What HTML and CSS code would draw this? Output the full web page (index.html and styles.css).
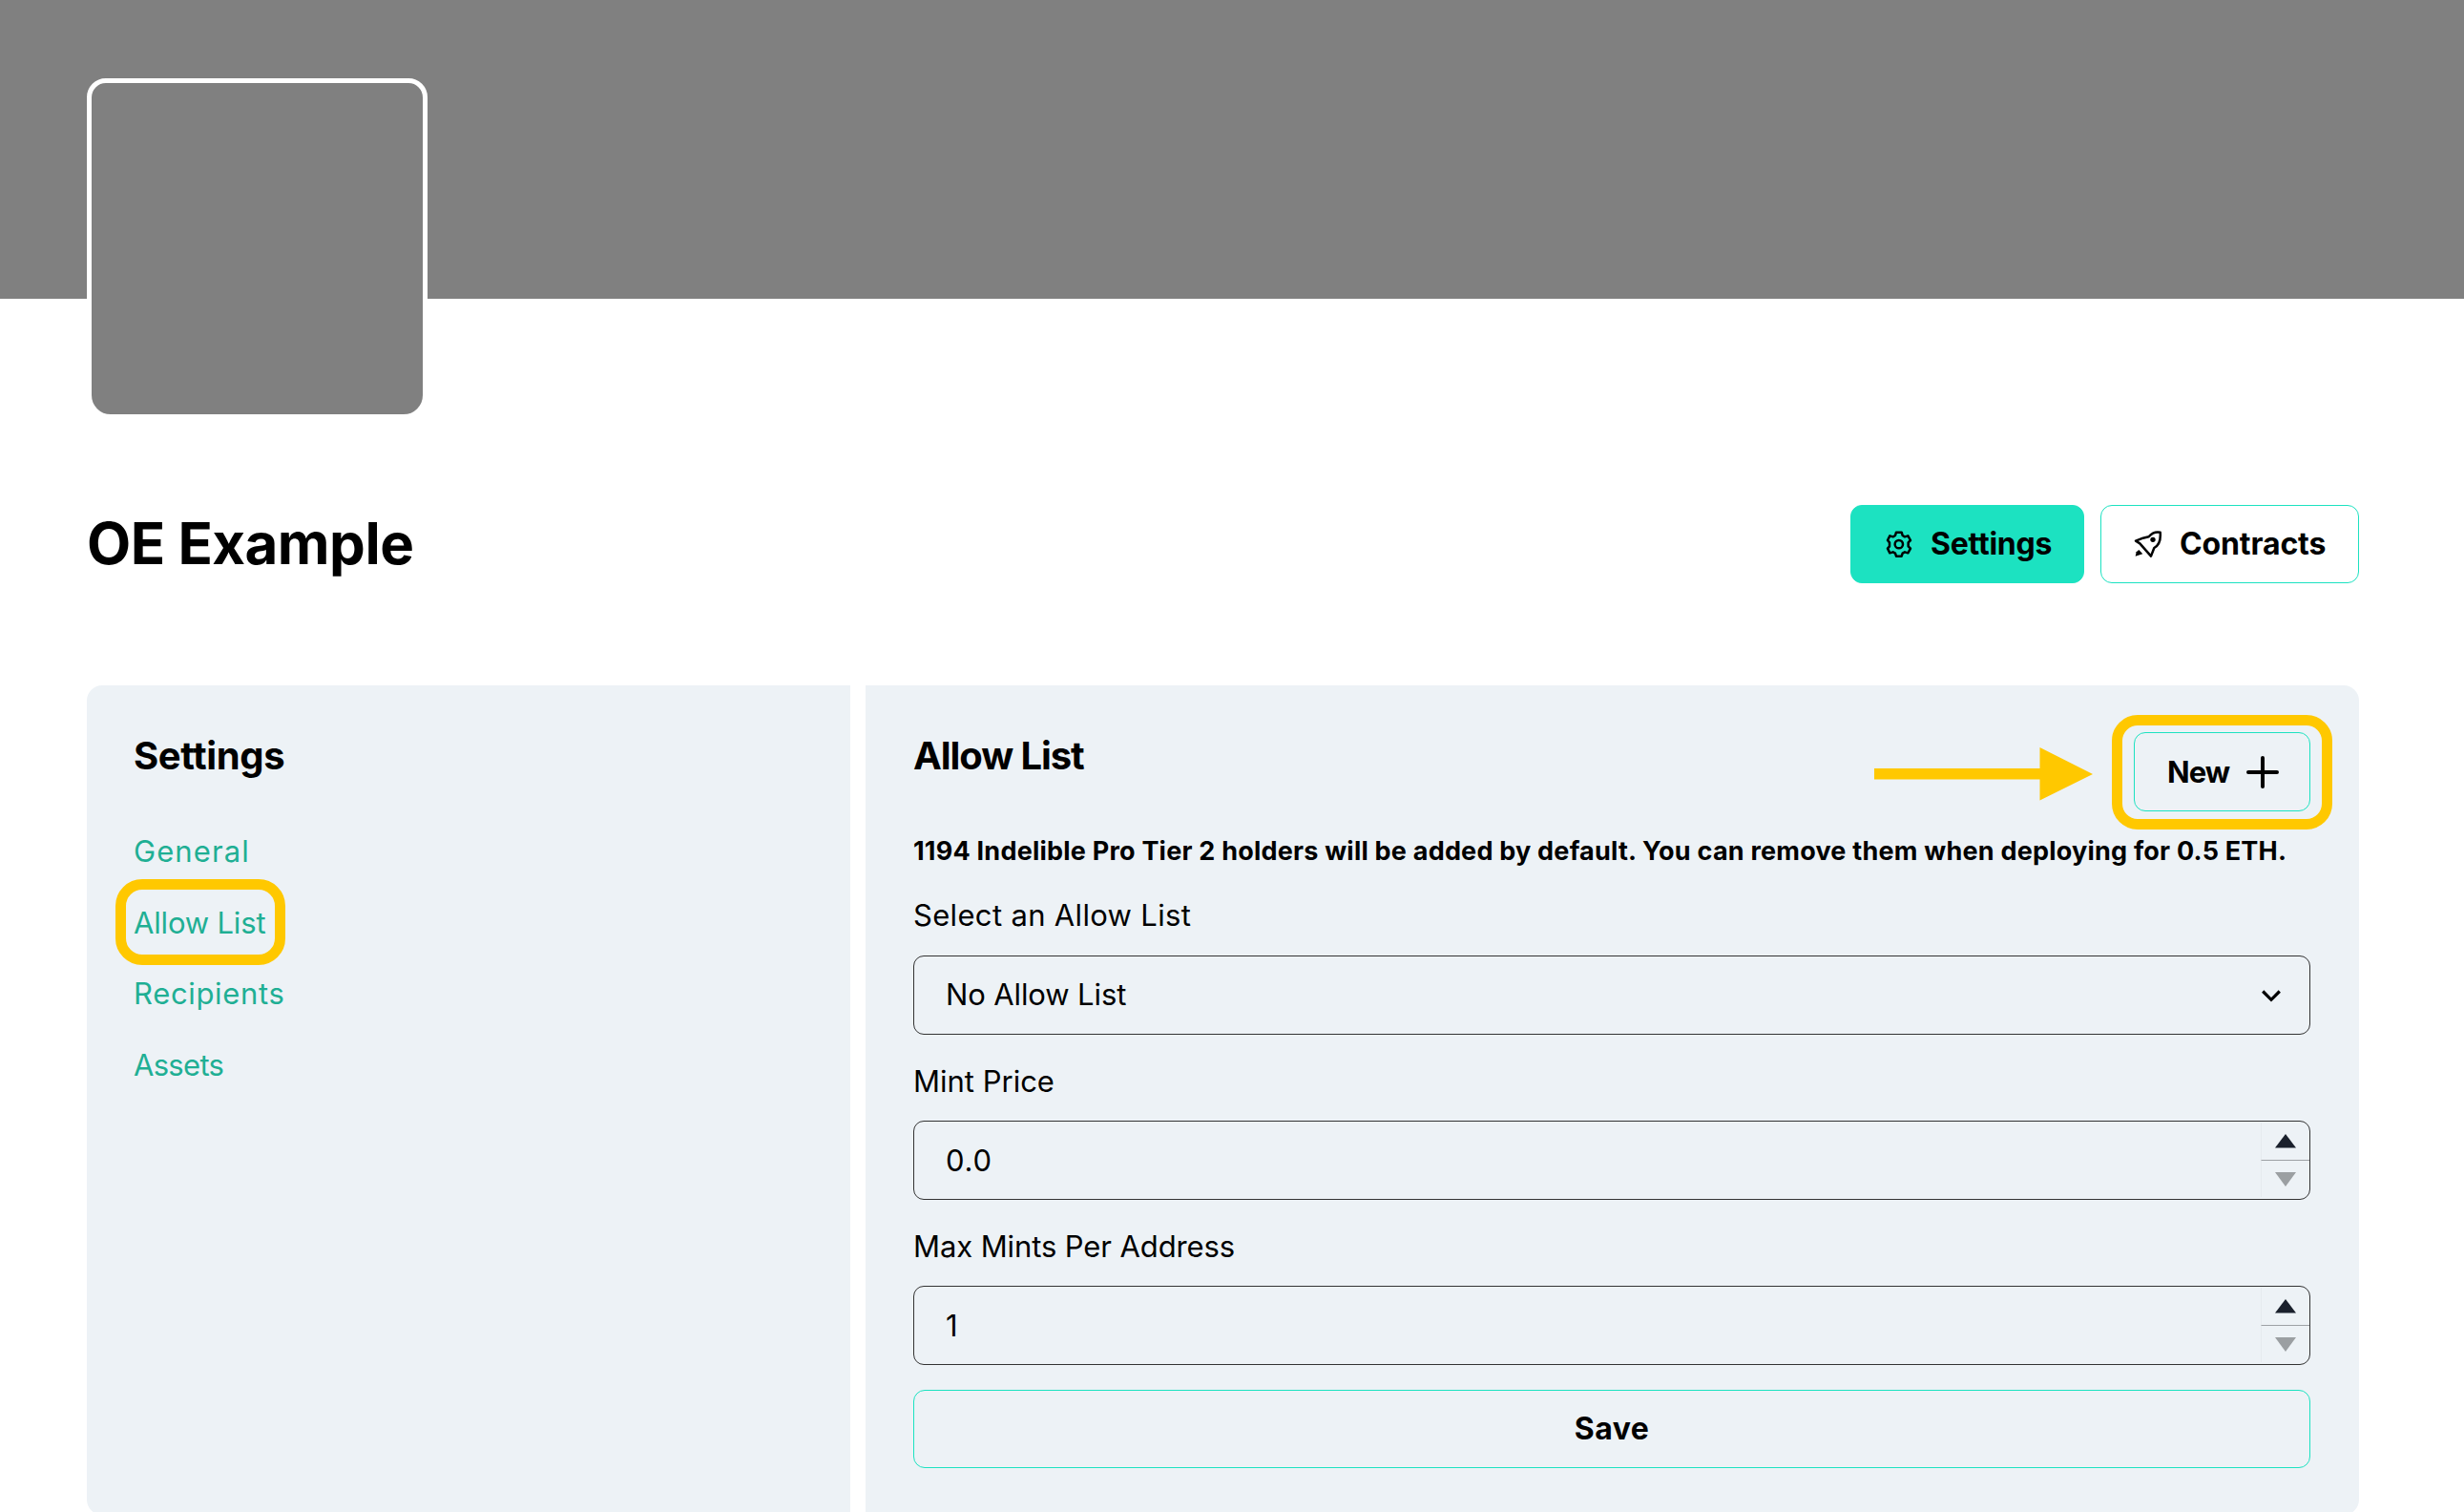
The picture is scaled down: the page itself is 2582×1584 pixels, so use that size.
FILE: index.html
```html
<!DOCTYPE html>
<html lang="en">
<head>
<meta charset="utf-8">
<title>OE Example – Settings</title>
<link rel="stylesheet" href="styles.css">
</head>
<body>
<div class="banner"><div class="avatar"></div></div>
<main class="page">
  <header class="toolbar">
    <h1 class="title">OE Example</h1>
    <div class="actions">
      <button class="btn btn-primary">
        <svg class="gear" viewBox="48 45 84 84" fill="none" stroke="currentColor" stroke-width="7.500" stroke-linejoin="round"><path d="M81 50H98L101 60 108 64 118 61 126 75 119 82V94L126 101 118 115 108 112 101 116 98 125H81L78 116 71 112 61 115 54 101 60 94V82L54 75 61 61 71 64 78 60Z"/><circle cx="89.500" cy="87.500" r="12.500"/></svg>
        <span>Settings</span>
      </button>
      <button class="btn btn-contracts">
        <svg class="rocket" viewBox="48 45 90 84" fill="none" stroke="currentColor" stroke-width="7.500" stroke-linejoin="round"><path d="M131 50C116 47 104 53 95 64L77 68 54 77 67 85 102 125 112 99C127 91 133 72 131 50Z"/><circle cx="108" cy="73" r="8" fill="currentColor" stroke="none"/><path d="M64 105L76 118 53 125 56 112Z" fill="currentColor" stroke="none"/></svg>
        <span>Contracts</span>
      </button>
    </div>
  </header>
  <div class="panels">
    <aside class="panel sidebar">
      <h2 class="heading heading-settings">Settings</h2>
      <nav class="nav">
        <a class="link-general">General</a>
        <a class="link-allow">Allow List</a>
        <a class="link-recipients">Recipients</a>
        <a class="link-assets">Assets</a>
      </nav>
    </aside>
    <section class="panel content">
      <div class="content-head">
        <h2 class="heading heading-allow">Allow List</h2>
        <div class="new-wrap">
          <svg class="arrow" viewBox="0 0 229 56" fill="#ffc800"><path d="M0 22H173.500V0L229 28 173.500 55.500V33.500H0Z"/></svg>
          <button class="btn btn-new"><span>New</span><svg class="plus" viewBox="0 0 34 34" fill="none" stroke="currentColor" stroke-width="4" stroke-linecap="round"><path d="M17 2V32M2 17H32"/></svg></button>
        </div>
      </div>
      <p class="note">1194 Indelible Pro Tier 2 holders will be added by default. You can remove them when deploying for 0.5 ETH.</p>
      <div class="label label-select">Select an Allow List</div>
      <div class="field field-select"><span class="val-select">No Allow List</span>
        <svg class="chevron" viewBox="0 0 20 13" fill="none" stroke="currentColor" stroke-width="3.200"><path d="M1.200 1.500L10 10.300 18.800 1.500"/></svg>
      </div>
      <div class="label label-price">Mint Price</div>
      <div class="field"><span class="val-price">0.0</span>
        <div class="stepper"><i><svg viewBox="0 0 22 15"><path d="M11 0L22 14.500H0Z" fill="#1a202c"/></svg></i><i class="down"><svg viewBox="0 0 22 15"><path d="M0 0H22L11 15Z" fill="#9b9fa2"/></svg></i></div>
      </div>
      <div class="label label-max">Max Mints Per Address</div>
      <div class="field"><span>1</span>
        <div class="stepper"><i><svg viewBox="0 0 22 15"><path d="M11 0L22 14.500H0Z" fill="#1a202c"/></svg></i><i class="down"><svg viewBox="0 0 22 15"><path d="M0 0H22L11 15Z" fill="#9b9fa2"/></svg></i></div>
      </div>
      <button class="btn btn-save"><span>Save</span></button>
    </section>
  </div>
</main>
</body>
</html>
```
FILE: styles.css
```css
*, *::before, *::after { box-sizing: border-box; margin: 0; }
html { overflow: hidden; }
body { height: 1584px; overflow: hidden; background: #fff; color: #000; font: 400 31px/40px Inter, "Liberation Sans", sans-serif; }
svg { display: block; flex: none; }

.banner { height: 313px; padding: 82px 0 0 91px; background: #808080; }
.avatar { position: relative; width: 357px; height: 357px; border: 5px solid #fff; border-radius: 20px 20px 25px 25px; background: #808080; }

.page { padding: 216px 110px 0 91px; }
.toolbar { display: flex; justify-content: space-between; align-items: center; height: 82px; }
.title { padding-bottom: 2px; font-size: 60px; line-height: 72px; letter-spacing: -.5px; }
.actions { display: flex; gap: 17px; }

.btn { display: flex; align-items: center; height: 82px; padding: 0; border: 1.500px solid #1ce2c1; border-radius: 12px; background: none; color: #000; font: 700 32px/40px Inter, "Liberation Sans", sans-serif; }
.btn-primary { width: 245px; padding-left: 36px; gap: 19px; background: #1ce2c1; letter-spacing: -.23px; }
.btn-contracts { width: 271px; padding-left: 34px; gap: 18px; letter-spacing: -.12px; }
.gear { width: 28px; height: 28px; }
.rocket { width: 30px; height: 28px; }

.panels { display: grid; grid-template-columns: 800px 1fr; gap: 16px; height: 869px; margin-top: 107px; }
.panel { padding: 49px 51px 0 50px; background: #edf2f6; }
.sidebar { padding-left: 49px; border-radius: 16px 0 0 16px; }
.content { border-radius: 0 16px 16px 0; }
.heading { padding-top: 1px; font-size: 40px; line-height: 48px; }
.heading-settings { letter-spacing: -.4px; }
.heading-allow { letter-spacing: -1.100px; }

.nav { display: flex; flex-direction: column; align-items: flex-start; margin-top: 39px; color: #1faf94; line-height: 74.500px; }
.link-general { letter-spacing: 1.080px; }
.link-allow { position: relative; letter-spacing: -.17px; }
.link-allow::after { content: ""; position: absolute; left: -19px; top: -9px; width: 178px; height: 90px; border: 11px solid #ffc800; border-radius: 28px; }
.link-recipients { letter-spacing: .67px; }
.link-assets { letter-spacing: -.7px; }

.content-head { display: flex; justify-content: space-between; height: 83px; }
.new-wrap { position: relative; }
.new-wrap::after { content: ""; position: absolute; inset: -18px -23px -19px; border: 11px solid #ffc800; border-radius: 27px; }
.arrow { position: absolute; right: 228px; top: 16px; width: 229px; height: 56px; }
.btn-new { width: 185px; height: 83px; padding-left: 34px; gap: 18px; font-size: 31px; letter-spacing: -.9px; }
.plus { width: 34px; height: 34px; }

.note { height: 40px; margin-top: 21px; padding-top: 1px; font-size: 27px; font-weight: 700; letter-spacing: .22px; white-space: nowrap; }
.label { margin: 29px 0 21px; }
.label-select { margin: 28px 0 22px; letter-spacing: .33px; }
.label-max { letter-spacing: -.1px; }
.field { display: flex; justify-content: space-between; height: 83px; padding-left: 33px; border: 1.500px solid #333; border-radius: 11px; line-height: 81px; }
.field-select { align-items: center; padding: 0 30px 2px 33px; }
.val-select { letter-spacing: -.12px; }
.val-price { letter-spacing: .8px; }
.chevron { width: 20px; height: 13px; margin-top: 3px; }
.stepper { display: flex; flex-direction: column; width: 51px; padding-top: 1px; }
.stepper i { display: flex; justify-content: center; height: 39px; padding-top: 12px; border-left: 1px solid #e5eaee; }
.stepper .down { padding-top: 12px; border-top: 1px solid #9da1a5; }
.stepper svg { width: 22px; height: 15px; }
.btn-save { justify-content: center; width: 100%; margin-top: 26px; letter-spacing: .47px; }
```
